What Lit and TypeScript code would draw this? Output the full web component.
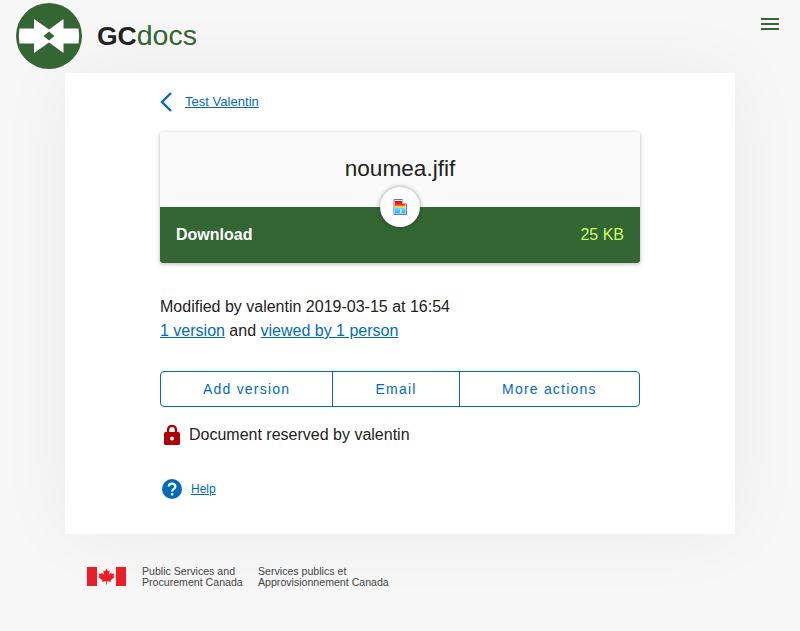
import { LitElement, html, css } from 'lit'
import { customElement } from 'lit/decorators.js'

@customElement('app-root')
export class AppRoot extends LitElement {
  static styles = css`
    :host {
      display: block;
      min-height: 631px;
      background: #f7f7f7;
      font-family: 'Liberation Sans', Arial, sans-serif;
      color: #222;
      overflow: hidden;
    }

    a {
      color: #006bbd;
    }

    .header {
      display: flex;
      align-items: flex-start;
      height: 73px;
      padding: 3px 21px 0 16px;
      box-sizing: border-box;
    }

    .logo {
      width: 66px;
      height: 66px;
      display: block;
    }

    .brand {
      margin: 16px 0 0 15px;
      font-size: 28.5px;
      line-height: 32px;
      color: #336633;
    }

    .brand b {
      font-size: 26.5px;
      color: #222;
    }

    .menu {
      margin-left: auto;
      margin-top: 15px;
      display: flex;
      flex-direction: column;
      gap: 3px;
    }

    .menu span {
      display: block;
      width: 18px;
      height: 2px;
      background: #336633;
    }

    .card {
      width: 670px;
      height: 461px;
      margin: 0 auto;
      padding: 19px 95px 0;
      box-sizing: border-box;
      background: #fff;
      box-shadow: 0 0 70px rgba(0, 0, 0, 0.05);
    }

    .back {
      display: flex;
      align-items: center;
      gap: 13px;
      height: 20px;
      font-size: 13px;
    }

    .back a {
      margin-top: -2px;
      letter-spacing: 0.03px;
    }

    .panel {
      margin-top: 20px;
      border-radius: 3px;
      overflow: hidden;
      box-shadow: 0 1px 4px rgba(0, 0, 0, 0.3);
    }

    .panel-wrap {
      position: relative;
    }

    .name {
      height: 75px;
      padding-top: 24px;
      box-sizing: border-box;
      background: #f9f9f9;
      text-align: center;
      font-size: 22.6px;
      line-height: 26px;
    }

    .download {
      display: flex;
      justify-content: space-between;
      align-items: center;
      height: 56px;
      padding: 0 16px;
      background: #336633;
      color: #fff;
      font-size: 16px;
    }

    .size {
      color: #ccff66;
    }

    .badge {
      position: absolute;
      left: 220px;
      top: 55px;
      width: 40px;
      height: 40px;
      border-radius: 50%;
      background: #fff;
      box-shadow: 0 0 4px rgba(0, 0, 0, 0.4);
      display: flex;
      align-items: center;
      justify-content: center;
    }

    .meta {
      margin-top: 32px;
      font-size: 16px;
      line-height: 24px;
    }

    .actions {
      display: grid;
      grid-template-columns: 172fr 127fr 181fr;
      height: 36px;
      margin-top: 28px;
      border: 1px solid #006bbd;
      border-radius: 4px;
      box-sizing: border-box;
    }

    .actions button {
      border: none;
      background: none;
      padding: 0;
      font: inherit;
      font-size: 14px;
      letter-spacing: 1.2px;
      color: #006bbd;
      border-left: 1px solid #006bbd;
    }

    .actions button:first-child {
      border-left: none;
    }

    .reserved {
      display: flex;
      align-items: center;
      gap: 8px;
      margin-top: 17px;
      padding-left: 3px;
      font-size: 16px;
      height: 22px;
    }

    .help {
      display: flex;
      align-items: center;
      gap: 9px;
      margin-top: 32px;
      padding-left: 2px;
      font-size: 12px;
      height: 22px;
    }

    .footer {
      display: flex;
      align-items: flex-start;
      padding: 33px 0 0 87px;
      color: #444;
      font-size: 10.6px;
      line-height: 11px;
      white-space: nowrap;
    }

    .flag {
      display: block;
      margin-right: 16px;
    }

    .footer div {
      width: 116px;
      margin-top: -1px;
    }
  `

  render() {
    return html`
      <div class="header">
        <svg class="logo" viewBox="0 0 66 66">
          <circle cx="33" cy="33" r="33" fill="#336633" />
          <path
            fill="#fff"
            d="M3.500 25.500H18V16L33 26.500 47.500 16V25.500H62.500Q63.800 33 62.500 40.500H47.500V50L33 39.500 18 50V40.500H3.500Q2.200 33 3.500 25.500Z"
          />
          <path fill="#336633" d="M33 28.500 38.500 33 33 37.500 27.500 33Z" />
        </svg>
        <span class="brand"><b>GC</b>docs</span>
        <div class="menu"><span></span><span></span><span></span></div>
      </div>

      <div class="card">
        <div class="back">
          <svg width="12" height="20" viewBox="0 0 12 20">
            <path d="M11 1 2 10 11 19" fill="none" stroke="#006bbd" stroke-width="2.400" />
          </svg>
          <a href="#">Test Valentin</a>
        </div>

        <div class="panel-wrap">
          <div class="panel">
            <div class="name">noumea.jfif</div>
            <div class="download"><b>Download</b><span class="size">25 KB</span></div>
          </div>
          <div class="badge">
            <svg width="14" height="16" viewBox="0 0 14 16">
              <defs>
                <linearGradient id="pic" x1="0" y1="0" x2="0" y2="1">
                  <stop offset="0" stop-color="#ee0000" />
                  <stop offset="0.300" stop-color="#ff3300" />
                  <stop offset="0.480" stop-color="#ffee33" />
                  <stop offset="0.580" stop-color="#66ddff" />
                  <stop offset="1" stop-color="#22aaff" />
                </linearGradient>
              </defs>
              <path d="M1 .5H9.500L13.500 4.500V15.500H1Z" fill="#fff" stroke="#6a6af0" />
              <rect x="2" y="2" width="10.500" height="12.500" fill="url(#pic)" />
              <path d="M9 1V5H13.500V1Z" fill="#fff" />
              <path d="M9.500 .5V4.500H13.500" fill="none" stroke="#b0b0f5" />
              <rect x="7" y="10" width="1.500" height="4.500" fill="#d8f2ff" />
            </svg>
          </div>
        </div>

        <div class="meta">
          Modified by valentin 2019-03-15 at 16:54<br />
          <a href="#">1 version</a> and <a href="#">viewed by 1 person</a>
        </div>

        <div class="actions">
          <button>Add version</button>
          <button>Email</button>
          <button>More actions</button>
        </div>

        <div class="reserved">
          <svg width="18" height="22" viewBox="0 0 18 22">
            <path d="M5 10V6C5 .5 13 .5 13 6V10" fill="none" stroke="#b00000" stroke-width="2.400" />
            <rect x="1" y="8" width="16" height="13" rx="1.500" fill="#b00000" />
            <circle cx="9" cy="14.500" r="2" fill="#fff" />
          </svg>
          <span>Document reserved by valentin</span>
        </div>

        <div class="help">
          <svg width="20" height="20" viewBox="0 0 20 20">
            <circle cx="10" cy="10" r="10" fill="#006bbd" />
            <path d="M6.800 7.500C6.800 3.700 13.400 3.700 13.400 7.500C13.400 10 10.100 9.800 10.100 12.500" fill="none" stroke="#fff" stroke-width="2.200" />
            <rect x="8.900" y="14" width="2.400" height="2.400" fill="#fff" />
          </svg>
          <a href="#">Help</a>
        </div>
      </div>

      <div class="footer">
        <svg class="flag" width="39" height="19" viewBox="0 0 39 19">
          <rect width="10" height="19" fill="#ee1c25" />
          <rect x="29" width="10" height="19" fill="#ee1c25" />
          <path
            fill="#ee1c25"
            d="M19.500 1.500 21 4.300 22.700 3.500 22 7.800 24.300 5.500 24.800 7 27.300 6.500 26.500 9.300 27.600 9.900 23.600 13.200 24 14.700 19.900 14.200V17.500H19.100V14.200L15 14.700 15.400 13.200 11.400 9.900 12.500 9.300 11.700 6.500 14.200 7 14.700 5.500 17 7.800 16.300 3.500 18 4.300Z"
          />
        </svg>
        <div>Public Services and<br />Procurement Canada</div>
        <div>Services publics et<br />Approvisionnement Canada</div>
      </div>
    `
  }
}
